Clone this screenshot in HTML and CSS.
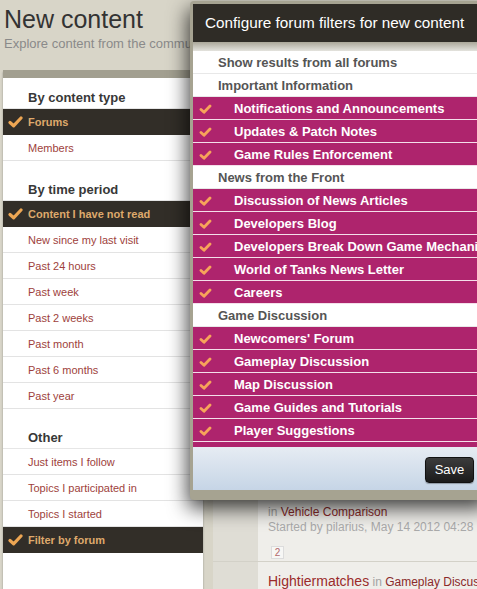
FILE: index.html
```html
<!DOCTYPE html>
<html lang="en">
<head>
<meta charset="utf-8">
<title>New content</title>
<link rel="stylesheet" href="styles.css">
</head>
<body>
<div class="page">
  <header class="page-head">
    <h1 class="page-title">New content</h1>
    <p class="page-sub">Explore content from the community</p>
  </header>

  <div class="layout">
    <aside class="side-menu">
      <h4 class="side-heading">By content type</h4>
      <ul class="side-list">
        <li><a class="side-link active" href="#"><span class="tick"><svg width="15" height="12" viewBox="0 0 15 12"><path d="M2 6.5 L5.6 9.8 L13 2" fill="none" stroke="#eda653" stroke-width="3.2" stroke-linecap="round" stroke-linejoin="round"/></svg></span>Forums</a></li>
        <li><a class="side-link" href="#"><span class="tick"></span>Members</a></li>
      </ul>

      <h4 class="side-heading">By time period</h4>
      <ul class="side-list">
        <li><a class="side-link active" href="#"><span class="tick"><svg width="15" height="12" viewBox="0 0 15 12"><path d="M2 6.5 L5.6 9.8 L13 2" fill="none" stroke="#eda653" stroke-width="3.2" stroke-linecap="round" stroke-linejoin="round"/></svg></span>Content I have not read</a></li>
        <li><a class="side-link" href="#"><span class="tick"></span>New since my last visit</a></li>
        <li><a class="side-link" href="#"><span class="tick"></span>Past 24 hours</a></li>
        <li><a class="side-link" href="#"><span class="tick"></span>Past week</a></li>
        <li><a class="side-link" href="#"><span class="tick"></span>Past 2 weeks</a></li>
        <li><a class="side-link" href="#"><span class="tick"></span>Past month</a></li>
        <li><a class="side-link" href="#"><span class="tick"></span>Past 6 months</a></li>
        <li><a class="side-link" href="#"><span class="tick"></span>Past year</a></li>
      </ul>

      <h4 class="side-heading">Other</h4>
      <ul class="side-list">
        <li><a class="side-link" href="#"><span class="tick"></span>Just items I follow</a></li>
        <li><a class="side-link" href="#"><span class="tick"></span>Topics I participated in</a></li>
        <li><a class="side-link" href="#"><span class="tick"></span>Topics I started</a></li>
        <li><a class="side-link active" href="#"><span class="tick"><svg width="15" height="12" viewBox="0 0 15 12"><path d="M2 6.5 L5.6 9.8 L13 2" fill="none" stroke="#eda653" stroke-width="3.2" stroke-linecap="round" stroke-linejoin="round"/></svg></span>Filter by forum</a></li>
      </ul>
    </aside>

    <main class="topics">
      <div class="topic first">
        <div class="topic-icon"></div>
        <div class="topic-body">
          <div class="topic-forum"><span class="muted">in</span> <a href="#" class="forum-link">Vehicle Comparison</a></div>
          <div class="topic-meta">Started by pilarius, May 14 2012 04:28 PM</div>
          <div class="pager"><span class="page-box">2</span></div>
        </div>
      </div>
      <div class="topic">
        <div class="topic-icon"></div>
        <div class="topic-body">
          <div class="topic-title"><a href="#" class="title-link">Hightiermatches</a> <span class="muted">in</span> <a href="#" class="forum-link">Gameplay Discussion</a></div>
        </div>
      </div>
    </main>
  </div>
</div>

<div class="modal">
  <div class="modal-title">Configure forum filters for new content</div>
  <div class="modal-body">
    <ul class="filter-list">
      <li class="f-row f-head">Show results from all forums</li>
      <li class="f-row f-head">Important Information</li>
      <li class="f-row f-forum"><span class="f-tick"><svg width="13" height="10" viewBox="0 0 13 10"><path d="M2 5.5 L5 8.2 L11 2" fill="none" stroke="#f7a45a" stroke-width="2.8" stroke-linecap="round" stroke-linejoin="round"/></svg></span>Notifications and Announcements</li>
      <li class="f-row f-forum"><span class="f-tick"><svg width="13" height="10" viewBox="0 0 13 10"><path d="M2 5.5 L5 8.2 L11 2" fill="none" stroke="#f7a45a" stroke-width="2.8" stroke-linecap="round" stroke-linejoin="round"/></svg></span>Updates &amp; Patch Notes</li>
      <li class="f-row f-forum"><span class="f-tick"><svg width="13" height="10" viewBox="0 0 13 10"><path d="M2 5.5 L5 8.2 L11 2" fill="none" stroke="#f7a45a" stroke-width="2.8" stroke-linecap="round" stroke-linejoin="round"/></svg></span>Game Rules Enforcement</li>
      <li class="f-row f-head">News from the Front</li>
      <li class="f-row f-forum"><span class="f-tick"><svg width="13" height="10" viewBox="0 0 13 10"><path d="M2 5.5 L5 8.2 L11 2" fill="none" stroke="#f7a45a" stroke-width="2.8" stroke-linecap="round" stroke-linejoin="round"/></svg></span>Discussion of News Articles</li>
      <li class="f-row f-forum"><span class="f-tick"><svg width="13" height="10" viewBox="0 0 13 10"><path d="M2 5.5 L5 8.2 L11 2" fill="none" stroke="#f7a45a" stroke-width="2.8" stroke-linecap="round" stroke-linejoin="round"/></svg></span>Developers Blog</li>
      <li class="f-row f-forum"><span class="f-tick"><svg width="13" height="10" viewBox="0 0 13 10"><path d="M2 5.5 L5 8.2 L11 2" fill="none" stroke="#f7a45a" stroke-width="2.8" stroke-linecap="round" stroke-linejoin="round"/></svg></span>Developers Break Down Game Mechanics</li>
      <li class="f-row f-forum"><span class="f-tick"><svg width="13" height="10" viewBox="0 0 13 10"><path d="M2 5.5 L5 8.2 L11 2" fill="none" stroke="#f7a45a" stroke-width="2.8" stroke-linecap="round" stroke-linejoin="round"/></svg></span>World of Tanks News Letter</li>
      <li class="f-row f-forum"><span class="f-tick"><svg width="13" height="10" viewBox="0 0 13 10"><path d="M2 5.5 L5 8.2 L11 2" fill="none" stroke="#f7a45a" stroke-width="2.8" stroke-linecap="round" stroke-linejoin="round"/></svg></span>Careers</li>
      <li class="f-row f-head">Game Discussion</li>
      <li class="f-row f-forum"><span class="f-tick"><svg width="13" height="10" viewBox="0 0 13 10"><path d="M2 5.5 L5 8.2 L11 2" fill="none" stroke="#f7a45a" stroke-width="2.8" stroke-linecap="round" stroke-linejoin="round"/></svg></span>Newcomers' Forum</li>
      <li class="f-row f-forum"><span class="f-tick"><svg width="13" height="10" viewBox="0 0 13 10"><path d="M2 5.5 L5 8.2 L11 2" fill="none" stroke="#f7a45a" stroke-width="2.8" stroke-linecap="round" stroke-linejoin="round"/></svg></span>Gameplay Discussion</li>
      <li class="f-row f-forum"><span class="f-tick"><svg width="13" height="10" viewBox="0 0 13 10"><path d="M2 5.5 L5 8.2 L11 2" fill="none" stroke="#f7a45a" stroke-width="2.8" stroke-linecap="round" stroke-linejoin="round"/></svg></span>Map Discussion</li>
      <li class="f-row f-forum"><span class="f-tick"><svg width="13" height="10" viewBox="0 0 13 10"><path d="M2 5.5 L5 8.2 L11 2" fill="none" stroke="#f7a45a" stroke-width="2.8" stroke-linecap="round" stroke-linejoin="round"/></svg></span>Game Guides and Tutorials</li>
      <li class="f-row f-forum"><span class="f-tick"><svg width="13" height="10" viewBox="0 0 13 10"><path d="M2 5.5 L5 8.2 L11 2" fill="none" stroke="#f7a45a" stroke-width="2.8" stroke-linecap="round" stroke-linejoin="round"/></svg></span>Player Suggestions</li>
      <li class="f-row f-forum"><span class="f-tick"></span>Vehicle Comparison</li>
    </ul>
    <div class="modal-foot">
      <button class="save-btn" type="button">Save</button>
    </div>
  </div>
</div>
</body>
</html>
```

FILE: styles.css
```css
html, body {
  margin: 0;
  padding: 0;
  overflow: hidden;
}

body {
  width: 477px;
  height: 589px;
  position: relative;
  background: #d8d5c8;
  font-family: "Liberation Sans", Arial, sans-serif;
  color: #333;
}

a { text-decoration: none; }
ul { list-style: none; margin: 0; padding: 0; }

/* Page header */
.page-head {
  padding: 4px 4px 0;
}
.page-title {
  margin: 0;
  font-size: 25px;
  line-height: 30px;
  font-weight: normal;
  color: #333;
}
.page-sub {
  margin: 2px 0 0;
  font-size: 13px;
  line-height: 16px;
  color: #8a8a8a;
  white-space: nowrap;
}

/* Layout */
.layout {
  display: flex;
  gap: 10px;
  margin-top: 18px;
  padding-left: 3px;
}

/* Side menu */
.side-menu {
  width: 200px;
  flex: none;
  background: #fff;
  border-top: 8px solid #a29f90;
  padding: 10px 0 31px;
  box-shadow: 0 2px 2px rgba(0, 0, 0, 0.3);
}
.side-heading {
  margin: 19px 0 1px;
  padding-left: 25px;
  font-size: 13px;
  line-height: 19px;
  font-weight: bold;
  color: #383838;
}
.side-heading:first-child {
  margin-top: 0;
}
.side-list {
  border-top: 1px solid #e6e6e6;
}
.side-link {
  display: flex;
  align-items: center;
  height: 25px;
  padding-left: 5px;
  border-bottom: 1px solid #e3e3e3;
  font-size: 11px;
  color: #9e3f3c;
}
.tick {
  width: 20px;
  flex: none;
  display: flex;
  align-items: center;
}
.side-link.active {
  background: #322e28;
  color: #dea96c;
  font-weight: bold;
  border-bottom-color: #322e28;
}

/* Topics (background content) */
.topics {
  flex: 1;
  min-width: 0;
  padding-top: 420px;
}
.topic {
  display: flex;
  border-bottom: 1px solid #d3d1c8;
}
.topic-icon {
  width: 45px;
  flex: none;
  background: #dfddd5;
}
.topic-body {
  flex: 1;
  min-width: 0;
  background: #efeeea;
  padding: 14px 0 2px 10px;
  white-space: nowrap;
  overflow: hidden;
}
.topic-forum {
  font-size: 12px;
  line-height: 16px;
}
.topic-meta {
  font-size: 12px;
  line-height: 15px;
  color: #aaa;
}
.muted { color: #a3a3a3; }
.forum-link { color: #8a2a2a; font-size: 12px; }
.title-link { color: #9b2b2b; font-size: 14px; }
.pager {
  margin-top: 11px;
  padding-left: 3px;
  height: 13px;
}
.page-box {
  display: inline-block;
  width: 11px;
  height: 11px;
  line-height: 11px;
  border: 1px solid #dcdcdc;
  background: #f7f7f5;
  font-size: 10px;
  color: #b36a6a;
  text-align: center;
  vertical-align: top;
}
.topic:not(.first) .topic-body {
  padding-top: 10px;
}
.topic-title {
  font-size: 12px;
  line-height: 18px;
}

/* Modal */
.modal {
  position: absolute;
  left: 190px;
  top: 1px;
  width: 294px;
  padding: 3px 3px 10px;
  background: #a6a391;
  border-radius: 4px;
  box-shadow: -2px 8px 20px rgba(0, 0, 0, 0.75);
}
.modal-title {
  height: 38px;
  display: flex;
  align-items: center;
  padding-left: 12px;
  background: #2f2c26;
  color: #fff;
  font-size: 15.3px;
  white-space: nowrap;
  overflow: hidden;
}
.modal-body {
  padding-top: 9px;
  background: linear-gradient(#aaa799, #e4e3dd 9px, #fff 9px);
}
.filter-list {
  height: 396px;
  overflow: hidden;
  background: #fff;
}
.f-row {
  display: flex;
  align-items: center;
  height: 22px;
  border-bottom: 1px solid #e8e8e8;
  font-size: 13px;
  font-weight: bold;
  white-space: nowrap;
  overflow: hidden;
}
.f-head {
  padding-left: 25px;
  color: #555;
  background: #fff;
}
.f-forum {
  padding-left: 6px;
  background: #ae246d;
  color: #fff;
  border-bottom-color: #f4dfea;
}
.f-tick {
  width: 35px;
  flex: none;
  display: flex;
  align-items: center;
  padding-top: 2px;
}
.modal-foot {
  height: 43px;
  display: flex;
  align-items: center;
  justify-content: flex-end;
  padding: 2px 13px 0 0;
  box-sizing: border-box;
  background: linear-gradient(#e6ecf3, #c6d5e6);
}
.save-btn {
  width: 49px;
  height: 26px;
  border: 1px solid #111;
  border-radius: 4px;
  background: linear-gradient(#3c3c3c, #1b1b1b);
  color: #fff;
  font-family: "Liberation Sans", Arial, sans-serif;
  font-size: 13px;
  padding: 0;
  box-shadow: 0 1px 1px rgba(0, 0, 0, 0.3);
}
```
